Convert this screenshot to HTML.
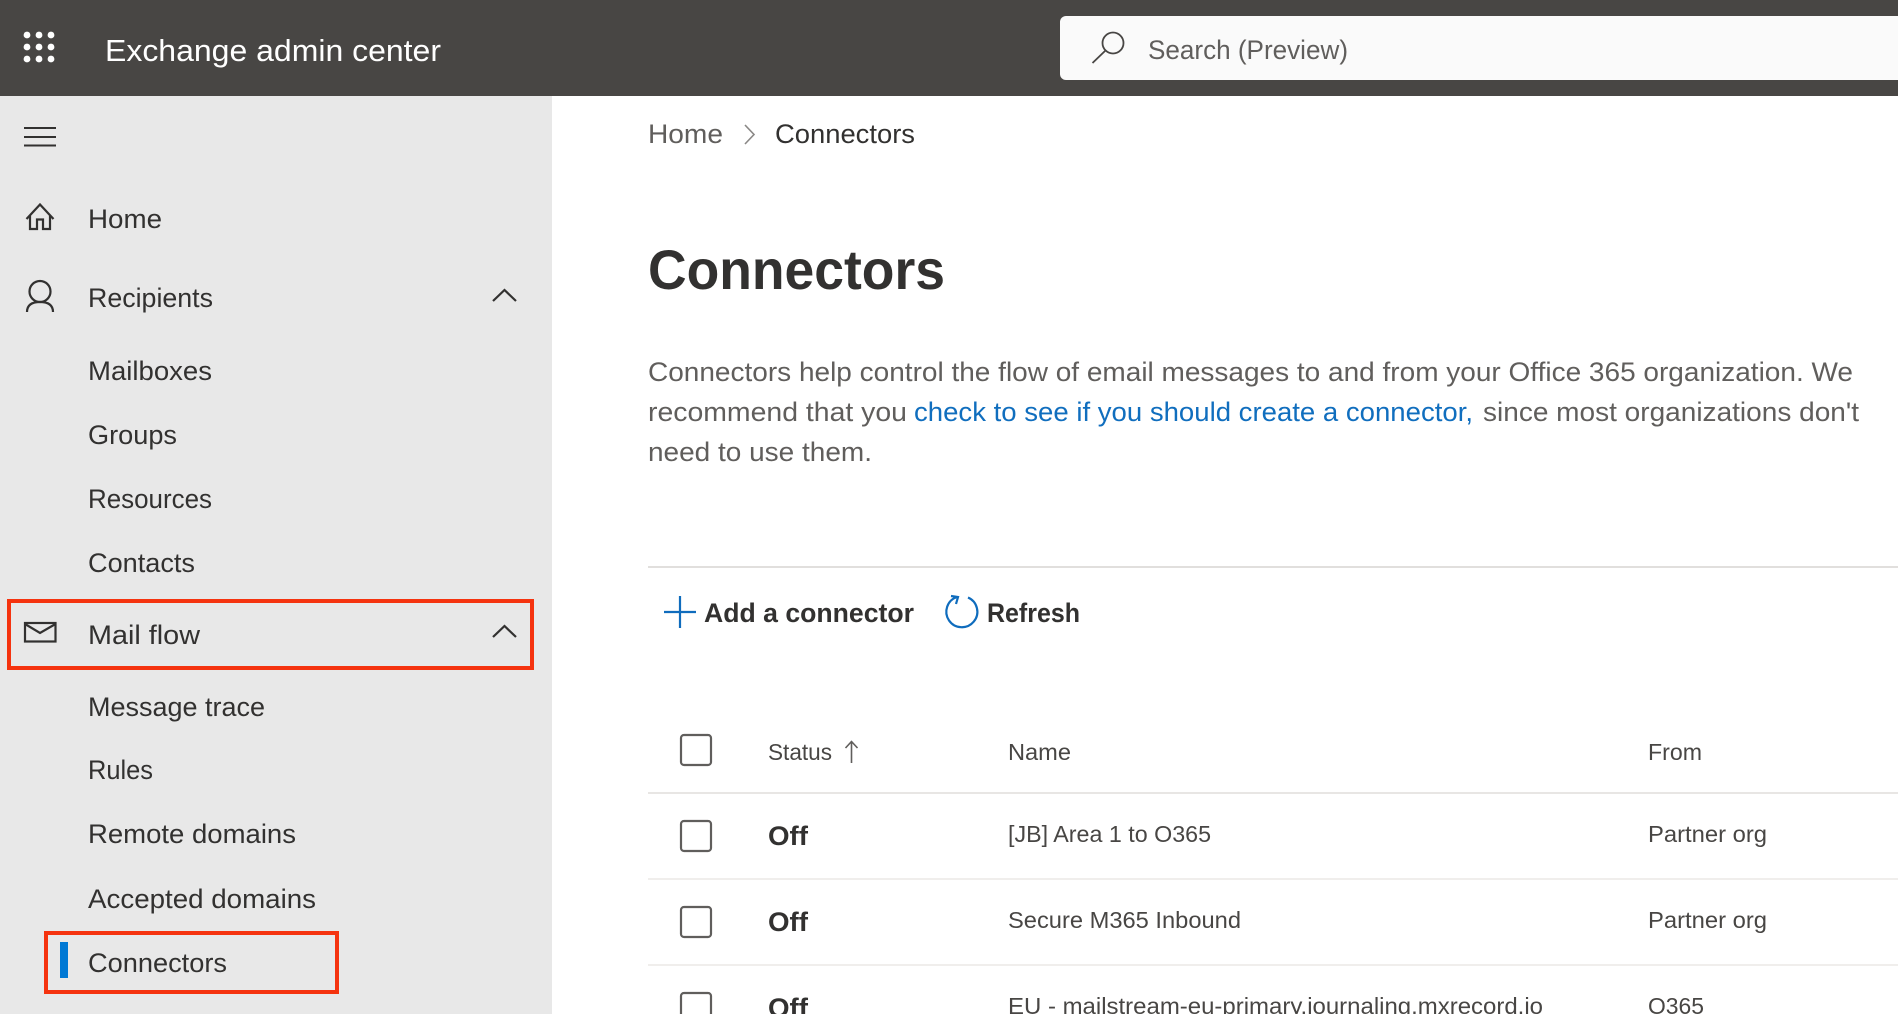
<!DOCTYPE html>
<html lang="en">
<head>
<meta charset="utf-8">
<title>Exchange admin center - Connectors</title>
<style>
html,body{margin:0;padding:0;width:1898px;height:1014px;overflow:hidden;background:#fff}
svg{display:block}
text{font-family:"Liberation Sans",Arial,sans-serif}
.nav{font-size:27px;fill:#323130}
.p{font-size:26.5px;fill:#605e5c}
.h{font-size:23px;fill:#484644}
.c{font-size:23px;fill:#484644}
.off{font-size:26.5px;font-weight:700;fill:#323130}
.tb{font-size:27px;font-weight:700;fill:#323130}
.ic{fill:none;stroke:#323130;stroke-width:2.2}
.cb{fill:none;stroke:#605e5c;stroke-width:2.2}
</style>
</head>
<body>
<svg width="1898" height="1014" viewBox="0 0 1898 1014" xmlns="http://www.w3.org/2000/svg">
<rect width="1898" height="1014" fill="#fff"/>
<rect width="1898" height="96" fill="#484644"/>
<rect y="96" width="552" height="918" fill="#e8e8e8"/>

<g fill="#fff">
<circle cx="27" cy="35" r="3.4"/><circle cx="39" cy="35" r="3.4"/><circle cx="51" cy="35" r="3.4"/>
<circle cx="27" cy="47" r="3.4"/><circle cx="39" cy="47" r="3.4"/><circle cx="51" cy="47" r="3.4"/>
<circle cx="27" cy="59" r="3.4"/><circle cx="39" cy="59" r="3.4"/><circle cx="51" cy="59" r="3.4"/>
</g>
<text x="105" y="61" font-size="31" fill="#fff" textLength="336" lengthAdjust="spacingAndGlyphs">Exchange admin center</text>

<path d="M1066 16H1898V80H1066a6 6 0 0 1-6-6V22a6 6 0 0 1 6-6z" fill="#fafafa"/>
<circle cx="1113" cy="43" r="10.5" fill="none" stroke="#484644" stroke-width="1.8"/>
<path d="M1105.500 50.500L1092.500 63" fill="none" stroke="#484644" stroke-width="1.8"/>
<text x="1148" y="59" font-size="27" fill="#605e5c" textLength="200" lengthAdjust="spacingAndGlyphs">Search (Preview)</text>

<path d="M24 128H56M24 137H56M24 145.500H56" stroke="#323130" stroke-width="2" fill="none"/>

<path class="ic" d="M26.500 219L40 204.500L53.500 219M30 215V229H37V219.500H43V229H50V215"/>
<text class="nav" x="88" y="228" textLength="74" lengthAdjust="spacingAndGlyphs">Home</text>

<circle class="ic" cx="40" cy="291.500" r="10.500"/>
<path class="ic" d="M27 312C27 305 32 302 40 302C48 302 53 305 53 312"/>
<text class="nav" x="88" y="307" textLength="125" lengthAdjust="spacingAndGlyphs">Recipients</text>
<path class="ic" d="M493 301L504.500 290L516 301"/>

<text class="nav" x="88" y="380" textLength="124" lengthAdjust="spacingAndGlyphs">Mailboxes</text>
<text class="nav" x="88" y="444" textLength="89" lengthAdjust="spacingAndGlyphs">Groups</text>
<text class="nav" x="88" y="508" textLength="124" lengthAdjust="spacingAndGlyphs">Resources</text>
<text class="nav" x="88" y="572" textLength="107" lengthAdjust="spacingAndGlyphs">Contacts</text>

<rect x="9" y="601" width="523" height="67" fill="none" stroke="#f5330f" stroke-width="4"/>
<rect class="ic" x="25" y="623" width="30.500" height="18.500"/>
<path class="ic" d="M25 624L40 633L55.500 624"/>
<text class="nav" x="88" y="644" textLength="112" lengthAdjust="spacingAndGlyphs">Mail flow</text>
<path class="ic" d="M493 637L504.500 626L516 637"/>

<text class="nav" x="88" y="716" textLength="177" lengthAdjust="spacingAndGlyphs">Message trace</text>
<text class="nav" x="88" y="779" textLength="65" lengthAdjust="spacingAndGlyphs">Rules</text>
<text class="nav" x="88" y="843" textLength="208" lengthAdjust="spacingAndGlyphs">Remote domains</text>
<text class="nav" x="88" y="908" textLength="228" lengthAdjust="spacingAndGlyphs">Accepted domains</text>

<rect x="46" y="933" width="291" height="59" fill="none" stroke="#f5330f" stroke-width="4"/>
<rect x="60" y="942" width="8" height="36" fill="#0078d4"/>
<text class="nav" x="88" y="972" textLength="139" lengthAdjust="spacingAndGlyphs">Connectors</text>

<text x="648" y="143" font-size="27" fill="#605e5c" textLength="75" lengthAdjust="spacingAndGlyphs">Home</text>
<path d="M745 125L754 134.500L745 144" fill="none" stroke="#8a8886" stroke-width="1.600"/>
<text x="775" y="143" font-size="27" fill="#323130" textLength="140" lengthAdjust="spacingAndGlyphs">Connectors</text>

<text x="648" y="289" font-size="56" font-weight="700" fill="#323130" textLength="297" lengthAdjust="spacingAndGlyphs">Connectors</text>

<text class="p" x="648" y="381" textLength="1205" lengthAdjust="spacingAndGlyphs">Connectors help control the flow of email messages to and from your Office 365 organization. We</text>
<text class="p" x="648" y="421" textLength="259" lengthAdjust="spacingAndGlyphs">recommend that you</text>
<text x="914" y="421" font-size="26.500" fill="#106ebe" textLength="559" lengthAdjust="spacingAndGlyphs">check to see if you should create a connector,</text>
<text class="p" x="1483" y="421" textLength="376" lengthAdjust="spacingAndGlyphs">since most organizations don't</text>
<text class="p" x="648" y="461" textLength="224" lengthAdjust="spacingAndGlyphs">need to use them.</text>

<rect x="648" y="566" width="1250" height="2" fill="#e1dfdd"/>

<path d="M664 612H696M680 596V628" stroke="#0f6cbd" stroke-width="2.200" fill="none"/>
<text class="tb" x="704" y="622" textLength="210" lengthAdjust="spacingAndGlyphs">Add a connector</text>
<path d="M957 597A15.500 15.500 0 1 0 968 597.500" fill="none" stroke="#0f6cbd" stroke-width="2.200"/>
<path d="M951 596L958 597L956 604" fill="none" stroke="#0f6cbd" stroke-width="2.200"/>
<text class="tb" x="987" y="622" textLength="93" lengthAdjust="spacingAndGlyphs">Refresh</text>

<rect class="cb" x="681" y="735" width="30" height="30" rx="3"/>
<text class="h" x="768" y="760" textLength="64" lengthAdjust="spacingAndGlyphs">Status</text>
<path d="M851.500 763V742M845.500 748L851.500 741.500L857.500 748" fill="none" stroke="#605e5c" stroke-width="1.600"/>
<text class="h" x="1008" y="760" textLength="63" lengthAdjust="spacingAndGlyphs">Name</text>
<text class="h" x="1648" y="760" textLength="54" lengthAdjust="spacingAndGlyphs">From</text>
<rect x="648" y="792" width="1250" height="2" fill="#e8e6e4"/>

<rect class="cb" x="681" y="821" width="30" height="30" rx="3"/>
<text class="off" x="768" y="845" textLength="40" lengthAdjust="spacingAndGlyphs">Off</text>
<text class="c" x="1008" y="842" textLength="203" lengthAdjust="spacingAndGlyphs">[JB] Area 1 to O365</text>
<text class="c" x="1648" y="842" textLength="119" lengthAdjust="spacingAndGlyphs">Partner org</text>
<rect x="648" y="878" width="1250" height="2" fill="#f0eeec"/>

<rect class="cb" x="681" y="907" width="30" height="30" rx="3"/>
<text class="off" x="768" y="931" textLength="40" lengthAdjust="spacingAndGlyphs">Off</text>
<text class="c" x="1008" y="928" textLength="233" lengthAdjust="spacingAndGlyphs">Secure M365 Inbound</text>
<text class="c" x="1648" y="928" textLength="119" lengthAdjust="spacingAndGlyphs">Partner org</text>
<rect x="648" y="964" width="1250" height="2" fill="#f0eeec"/>

<rect class="cb" x="681" y="993" width="30" height="30" rx="3"/>
<text class="off" x="768" y="1017" textLength="40" lengthAdjust="spacingAndGlyphs">Off</text>
<text class="c" x="1008" y="1014" textLength="535" lengthAdjust="spacingAndGlyphs">EU - mailstream-eu-primary.journaling.mxrecord.io</text>
<text class="c" x="1648" y="1014" textLength="56" lengthAdjust="spacingAndGlyphs">O365</text>
</svg>
</body>
</html>
